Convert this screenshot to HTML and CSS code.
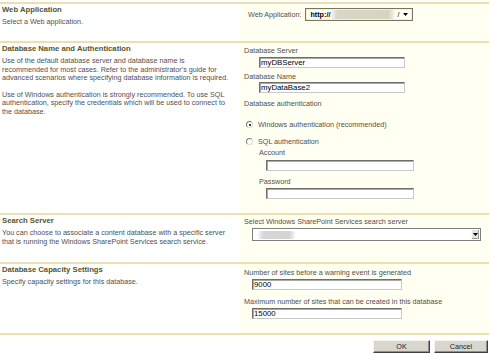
FILE: index.html
```html
<!DOCTYPE html>
<html lang="en">
<head>
<meta charset="utf-8">
<title>New Content Database</title>
<link rel="stylesheet" href="styles.css">
</head>
<body>
<div class="page">
  <section class="row">
    <div class="desc">
      <h3 class="head">Web Application</h3>
      <p class="text">Select a Web application.</p>
    </div>
    <div class="ctrl ctrl-webapp">
      <span class="inline-label">Web Application:</span>
      <div class="wa-select">
        <span class="wa-proto">http://</span>
        <span class="smear smear-wa"></span>
        <span class="wa-slash">/</span>
        <svg class="wa-arrow" width="5" height="3" viewBox="0 0 5 3"><path d="M0 0H5L2.5 3Z" fill="#000"/></svg>
      </div>
    </div>
  </section>

  <section class="row">
    <div class="desc">
      <h3 class="head">Database Name and Authentication</h3>
      <p class="text">Use of the default database server and database name is<br>recommended for most cases. Refer to the administrator's guide for<br>advanced scenarios where specifying database information is required.</p>
      <p class="text text-next">Use of Windows authentication is strongly recommended. To use SQL<br>authentication, specify the credentials which will be used to connect to<br>the database.</p>
    </div>
    <div class="ctrl ctrl-db">
      <label class="lbl">Database Server</label>
      <input class="txt txt-db" type="text" value="myDBServer">
      <label class="lbl lbl-dbname">Database Name</label>
      <input class="txt txt-db txt-dbname" type="text" value="myDataBase2">
      <div class="lbl lbl-auth">Database authentication</div>
      <label class="radio-row radio-win"><span class="radio checked"></span>Windows authentication (recommended)</label>
      <label class="radio-row radio-sql"><span class="radio"></span>SQL authentication</label>
      <label class="lbl lbl-sub lbl-account">Account</label>
      <input class="txt txt-sub txt-account" type="text" value="">
      <label class="lbl lbl-sub lbl-password">Password</label>
      <input class="txt txt-sub txt-password" type="password" value="">
    </div>
  </section>

  <section class="row">
    <div class="desc">
      <h3 class="head">Search Server</h3>
      <p class="text">You can choose to associate a content database with a specific server<br>that is running the Windows SharePoint Services search service.</p>
    </div>
    <div class="ctrl ctrl-search">
      <div class="lbl">Select Windows SharePoint Services search server</div>
      <div class="search-select">
        <span class="smear smear-search"></span>
        <span class="drop-btn"><svg width="5" height="3" viewBox="0 0 5 3"><path d="M0 0H5L2.5 3Z" fill="#000"/></svg></span>
      </div>
    </div>
  </section>

  <section class="row">
    <div class="desc">
      <h3 class="head">Database Capacity Settings</h3>
      <p class="text">Specify capacity settings for this database.</p>
    </div>
    <div class="ctrl ctrl-cap">
      <label class="lbl">Number of sites before a warning event is generated</label>
      <input class="txt txt-cap" type="text" value="9000">
      <label class="lbl lbl-max">Maximum number of sites that can be created in this database</label>
      <input class="txt txt-cap" type="text" value="15000">
    </div>
  </section>

  <div class="buttons">
    <button class="btn btn-ok" type="button">OK</button>
    <button class="btn btn-cancel" type="button">Cancel</button>
  </div>
</div>
</body>
</html>
```

FILE: styles.css
```css
* { box-sizing: border-box; }

body {
  margin: 0;
  background: #ffffff;
  font-family: "Liberation Sans", Arial, sans-serif;
  font-size: 7.2px;
  color: #505050;
}

.page {
  width: 489px;
  padding-top: 2px;
}

.row {
  display: grid;
  grid-template-columns: 240px 249px;
  border-top: 2px solid #ebe1b0;
}

.desc {
  padding: 1px 0 0 2px;
}

.head {
  margin: 0;
  font-size: 7.7px;
  line-height: 9px;
  font-weight: bold;
  color: #56562c;
  white-space: nowrap;
}

.text {
  margin: 4px 0 0;
  line-height: 8.7px;
  white-space: nowrap;
}

.text-next { margin-top: 7.5px; }

.ctrl {
  background: #fffff2;
  padding: 3px 0 14px 4px;
  display: flex;
  flex-direction: column;
  align-items: flex-start;
}

.lbl {
  display: block;
  line-height: 9px;
  height: 9px;
  white-space: nowrap;
}

.txt {
  display: block;
  height: 11px;
  margin: 2px 0 0 15px;
  width: 146px;
  padding: 0 1px;
  font-family: "Liberation Sans", Arial, sans-serif;
  font-size: 7.8px;
  color: #000;
  background: #fff;
  border-top: 1px solid #6e6e6e;
  border-left: 1px solid #6e6e6e;
  border-right: 1px solid #c9c9c9;
  border-bottom: 1px solid #c9c9c9;
  box-shadow: inset 1px 1px 0 #a8a8a8;
  outline: none;
}

/* web application */
.ctrl-webapp {
  flex-direction: row;
  align-items: center;
  padding: 4px 0 20px 8px;
}

.inline-label {
  margin-right: 4px;
  white-space: nowrap;
}

.wa-select {
  display: flex;
  align-items: center;
  width: 108px;
  height: 13px;
  padding: 0 3px 0 4px;
  background: #fffff6;
  border: 1px solid #777760;
  box-shadow: inset 0 0 0 1px #f3f0d8;
  color: #000;
}

.wa-proto {
  font-weight: bold;
  font-size: 7.2px;
}

.smear {
  display: block;
  border-radius: 2px;
}

.smear-wa {
  width: 64px;
  height: 9px;
  margin-left: 1px;
  background: linear-gradient(to right, rgba(214,212,196,0.2), #d8d6c6 10%, #d6d4c2 90%, rgba(214,212,196,0.2));
}

.wa-slash {
  margin-left: 2px;
  font-size: 7.2px;
}

.wa-arrow {
  margin-left: 4px;
}

/* database section */
.lbl-dbname { margin-top: 4px; }
.txt-dbname { margin-top: 1px; }
.lbl-auth { margin-top: 6px; }

.radio-row {
  display: flex;
  align-items: center;
  height: 9px;
  margin-left: 2px;
  white-space: nowrap;
}

.radio-win { margin-top: 12px; }
.radio-sql { margin-top: 8px; }

.radio {
  position: relative;
  width: 7px;
  height: 7px;
  margin-right: 5px;
  border-radius: 50%;
  background: #fff;
  border: 1px solid;
  border-color: #7c7c7c #d8d8d8 #d8d8d8 #7c7c7c;
}

.radio.checked::after {
  content: "";
  position: absolute;
  left: 1.5px;
  top: 1.5px;
  width: 2px;
  height: 2px;
  border-radius: 50%;
  background: #000;
}

.lbl-sub { margin-left: 15px; }
.lbl-account { margin-top: 2px; }
.lbl-password { margin-top: 6px; }

.txt-sub {
  margin-left: 22px;
  width: 148px;
}

.txt-account { margin-top: 3px; }

/* search */
.ctrl-search {
  padding: 2px 0 21px 4px;
}

.search-select {
  display: flex;
  align-items: center;
  justify-content: space-between;
  width: 229px;
  height: 13px;
  margin: 2px 0 0 8px;
  padding: 0 1px 0 5px;
  background: #fff;
  border: 1px solid #7f7f7f;
}

.smear-search {
  width: 37px;
  height: 8px;
  background: linear-gradient(to right, rgba(212,212,212,0.2), #d6d6d6 15%, #d4d4d4 85%, rgba(212,212,212,0.2));
}

.drop-btn {
  display: flex;
  align-items: center;
  justify-content: center;
  width: 8px;
  height: 9px;
  background: #e6e4de;
  border-left: 1px solid #fafafa;
  box-shadow: inset -1px -1px 0 #9a9a9a;
}

/* capacity */
.ctrl-cap {
  padding: 4px 0 14px 4px;
}

.txt-cap {
  margin-left: 8px;
  width: 150px;
}

.lbl-max { margin-top: 7px; }

/* buttons */
.buttons {
  display: flex;
  justify-content: flex-end;
  gap: 4px;
  padding: 5px 1px 0 0;
  border-top: 2px solid #ebe1b0;
}

.btn {
  height: 13px;
  padding: 0;
  font-family: "Liberation Sans", Arial, sans-serif;
  font-size: 7.2px;
  color: #222;
  background: #d9d6ce;
  border-top: 1px solid #f4f4f0;
  border-left: 1px solid #f4f4f0;
  border-right: 1px solid #404040;
  border-bottom: 1px solid #404040;
  box-shadow: inset -1px -1px 0 #8e8e8e;
}

.btn-ok { width: 57px; }
.btn-cancel { width: 54px; }
```
